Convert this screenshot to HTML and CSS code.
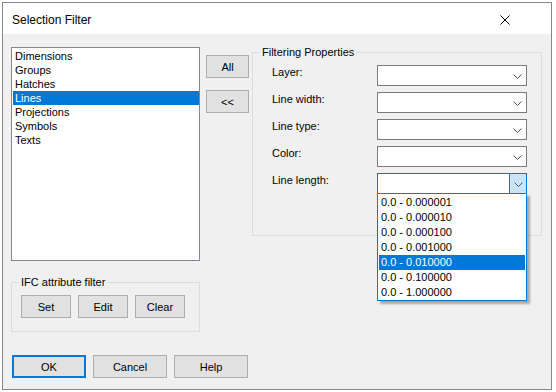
FILE: index.html
```html
<!DOCTYPE html>
<html lang="en">
<head>
    <meta charset="UTF-8">
    <meta name="viewport" content="width=device-width, initial-scale=1.0">
    <title>Selection Filter</title>
    <link rel="stylesheet" href="styles.css">
</head>
<body>
    <div class="dialog">
        <div class="titlebar">
            <span class="title">Selection Filter</span>
            <svg class="close" width="10" height="10" viewBox="0 0 10 10">
                <path d="M0.5 0.5 L9.5 9.5 M9.5 0.5 L0.5 9.5" stroke="#000" stroke-width="1" fill="none"/>
            </svg>
        </div>
        <div class="content">
            <div class="main">
                <div class="left">
                    <ul class="listbox">
                        <li>Dimensions</li>
                        <li>Groups</li>
                        <li>Hatches</li>
                        <li class="selected">Lines</li>
                        <li>Projections</li>
                        <li>Symbols</li>
                        <li>Texts</li>
                    </ul>
                    <fieldset class="group ifc">
                        <legend>IFC attribute filter</legend>
                        <div class="ifc-buttons">
                            <button class="btn small">Set</button>
                            <button class="btn small">Edit</button>
                            <button class="btn small">Clear</button>
                        </div>
                    </fieldset>
                </div>
                <div class="side-buttons">
                    <button class="btn side">All</button>
                    <button class="btn side">&lt;&lt;</button>
                </div>
                <fieldset class="group props">
                    <legend>Filtering Properties</legend>
                    <div class="prop-grid">
                        <label>Layer:</label>
                        <div class="combo"><span class="arrow"><svg width="9" height="5" viewBox="0 0 9 5"><path d="M0.5 0.5 L4.5 4.5 L8.5 0.5" stroke="#555" fill="none"/></svg></span></div>
                        <label>Line width:</label>
                        <div class="combo"><span class="arrow"><svg width="9" height="5" viewBox="0 0 9 5"><path d="M0.5 0.5 L4.5 4.5 L8.5 0.5" stroke="#555" fill="none"/></svg></span></div>
                        <label>Line type:</label>
                        <div class="combo"><span class="arrow"><svg width="9" height="5" viewBox="0 0 9 5"><path d="M0.5 0.5 L4.5 4.5 L8.5 0.5" stroke="#555" fill="none"/></svg></span></div>
                        <label>Color:</label>
                        <div class="combo"><span class="arrow"><svg width="9" height="5" viewBox="0 0 9 5"><path d="M0.5 0.5 L4.5 4.5 L8.5 0.5" stroke="#555" fill="none"/></svg></span></div>
                        <label>Line length:</label>
                        <div class="combo open">
                            <span class="arrow"><svg width="9" height="5" viewBox="0 0 9 5"><path d="M0.5 0.5 L4.5 4.5 L8.5 0.5" stroke="#555" fill="none"/></svg></span>
                            <ul class="dropdown">
                                <li>0.0 - 0.000001</li>
                                <li>0.0 - 0.000010</li>
                                <li>0.0 - 0.000100</li>
                                <li>0.0 - 0.001000</li>
                                <li class="selected">0.0 - 0.010000</li>
                                <li>0.0 - 0.100000</li>
                                <li>0.0 - 1.000000</li>
                            </ul>
                        </div>
                    </div>
                </fieldset>
            </div>
            <div class="footer">
                <button class="btn wide default">OK</button>
                <button class="btn wide">Cancel</button>
                <button class="btn wide">Help</button>
            </div>
        </div>
    </div>
</body>
</html>
```

FILE: styles.css
```css
body {
    margin: 0;
    background: #fff;
    font-family: "Liberation Sans", Arial, sans-serif;
    font-size: 11px;
    color: #000;
}

.dialog {
    margin: 2px 0 0 2px;
    width: 548px;
    height: 386px;
    border: 1px solid #888;
    background: #f0f0f0;
    display: flex;
    flex-direction: column;
}

.titlebar {
    height: 31px;
    background: #fff;
    display: flex;
    align-items: center;
    justify-content: space-between;
    padding: 3px 41px 0 9px;
    box-sizing: border-box;
}

.title {
    font-size: 12px;
}

.content {
    padding: 13px 0 0 8px;
}

.main {
    display: flex;
    align-items: flex-start;
}

.left {
    width: 189px;
}

.listbox {
    list-style: none;
    margin: 0;
    padding: 1px 0 0 1px;
    height: 214px;
    box-sizing: border-box;
    border: 1px solid #828790;
    background: #fff;
}

.listbox li {
    height: 14px;
    line-height: 14px;
    padding-left: 2px;
}

.listbox li.selected {
    background: #0078d7;
    color: #fff;
}

.group {
    margin: 0;
    padding: 0;
    border: 1px solid #dcdcdc;
    box-sizing: border-box;
}

.group legend {
    margin-left: 7px;
    padding: 0 2px;
    line-height: 13px;
}

.btn {
    font-family: inherit;
    font-size: 11px;
    color: #000;
    background: #e1e1e1;
    border: 1px solid #adadad;
    padding: 0;
    margin: 0;
    box-sizing: border-box;
}

.ifc {
    margin-top: 15px;
    width: 189px;
    height: 56px;
}

.ifc-buttons {
    display: flex;
    gap: 7px;
    padding: 6px 0 0 9px;
}

.btn.small {
    width: 50px;
    height: 23px;
}

.side-buttons {
    display: flex;
    flex-direction: column;
    gap: 12px;
    margin-left: 6px;
    padding-top: 8px;
}

.btn.side {
    width: 43px;
    height: 23px;
}

.props {
    margin-left: 3px;
    margin-top: -1px;
    width: 290px;
    height: 190px;
}

.prop-grid {
    display: grid;
    grid-template-columns: 105px 150px;
    grid-auto-rows: 21px;
    row-gap: 6px;
    padding: 6px 0 0 19px;
}

.prop-grid label {
    line-height: 15px;
}

.combo {
    position: relative;
    border: 1px solid #7a7a7a;
    background: #fff;
    display: flex;
    justify-content: flex-end;
}

.combo .arrow {
    width: 17px;
    display: flex;
    align-items: center;
    justify-content: center;
    padding-top: 1px;
    box-sizing: border-box;
}

.combo.open {
    border-color: #0078d7;
}

.combo.open .arrow {
    background: #cce4f7;
    border-left: 1px solid #0078d7;
}

.dropdown {
    position: absolute;
    left: -1px;
    top: 19px;
    width: 150px;
    height: 108px;
    margin: 0;
    padding: 1px;
    list-style: none;
    box-sizing: border-box;
    background: #fff;
    border: 1px solid #0078d7;
    box-shadow: 3px 3px 2px rgba(0, 0, 0, 0.3);
    z-index: 2;
}

.dropdown li {
    height: 15px;
    line-height: 15px;
    padding-left: 2px;
}

.dropdown li.selected {
    background: #0078d7;
    color: #fff;
}

.footer {
    display: flex;
    gap: 7px;
    margin: 23px 0 0 1px;
}

.btn.wide {
    width: 74px;
    height: 23px;
}

.btn.default {
    border: 2px solid #0078d7;
}
```
